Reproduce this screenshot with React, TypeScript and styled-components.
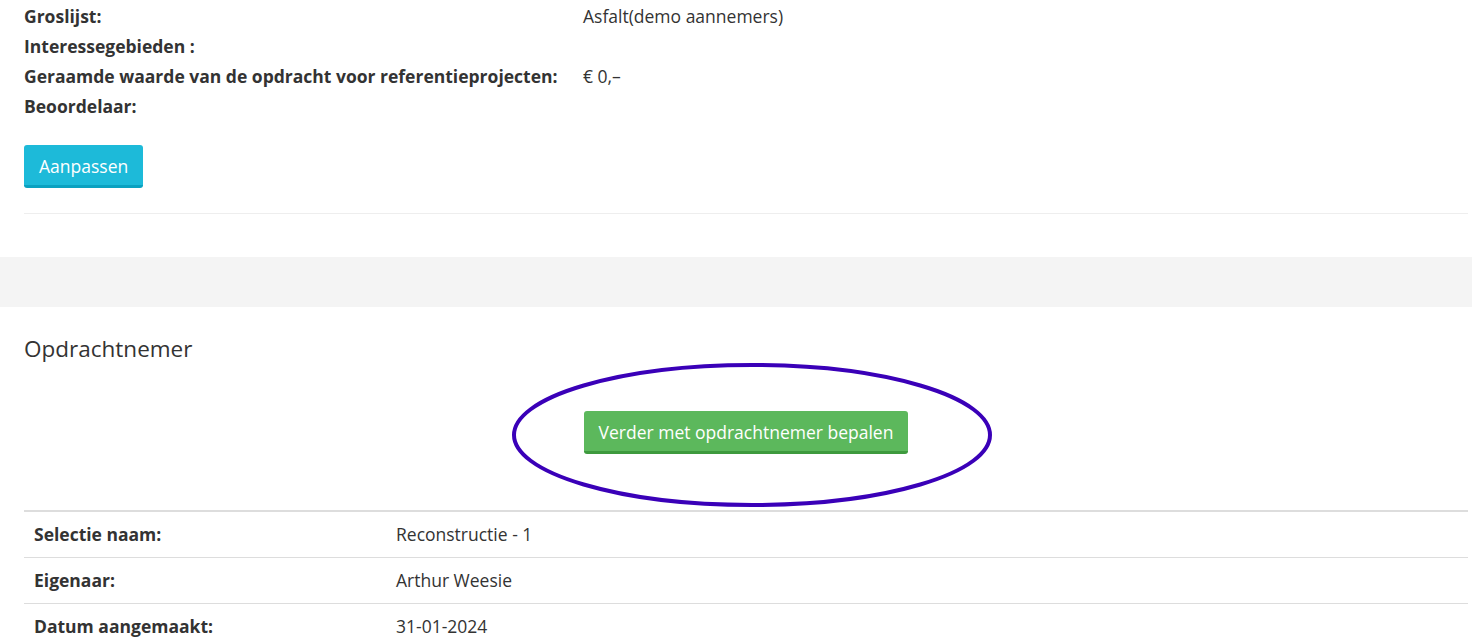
import React, { FC } from 'react';
import styled, { createGlobalStyle } from 'styled-components';

const GlobalStyle = createGlobalStyle`
  body {
    margin: 0;
    background: #fff;
    font-family: 'Open Sans', 'Liberation Sans', sans-serif;
    color: #333;
    font-size: 17.5px;
  }
  * { box-sizing: border-box; }
`;

const StyledSection = styled.section`
  padding: 1px 4px 0 24px;
`;

const StyledInfoList = styled.div`
  display: grid;
  grid-template-columns: 559px 1fr;
`;

const StyledInfoLabel = styled.div`
  font-weight: 700;
  line-height: 30px;
  height: 30px;
  white-space: nowrap;
`;

const StyledInfoValue = styled.div`
  line-height: 30px;
  height: 30px;
`;

const StyledButton = styled.button<{ $variant: 'info' | 'success' }>`
  font-family: 'Open Sans', 'Liberation Sans', sans-serif;
  font-size: 17.5px;
  color: #fff;
  border: none;
  border-radius: 3px;
  cursor: pointer;
  height: 43px;
  padding: 2px 15px 0;
  background: ${(p) => (p.$variant === 'info' ? '#1dbad9' : '#5cb85c')};
  border-bottom: 3px solid ${(p) => (p.$variant === 'info' ? '#0aa1c0' : '#3e9a3e')};
`;

const StyledActions = styled.div`
  margin-top: 24px;
`;

const StyledDivider = styled.hr`
  margin: 25px 0 0;
  border: none;
  border-top: 1px solid #eeeeee;
`;

const StyledBand = styled.div`
  margin-top: 43px;
  height: 50px;
  background: #f4f4f4;
`;

const StyledHeading = styled.h3`
  margin: 0;
  font-size: 22.5px;
  font-weight: 400;
  line-height: 30px;
  padding-top: 26px;
  color: #333;
`;

const StyledCenter = styled.div`
  display: flex;
  justify-content: center;
  margin-top: 47px;
`;

const StyledHighlight = styled.div`
  position: relative;
`;

const StyledEllipse = styled.svg`
  position: absolute;
  left: -73px;
  top: -49px;
  pointer-events: none;
  overflow: visible;
`;

const StyledTable = styled.table`
  width: 100%;
  border-collapse: collapse;
  margin-top: 56px;
  border-top: 2px solid #dddddd;
`;

const StyledRow = styled.tr`
  & + & td {
    border-top: 1px solid #dddddd;
  }
`;

const StyledCell = styled.td<{ $bold?: boolean }>`
  padding: 0 10px;
  height: 46px;
  font-weight: ${(p) => (p.$bold ? 700 : 400)};
  width: ${(p) => (p.$bold ? '362px' : 'auto')};
  vertical-align: middle;
`;

const info = [
  { label: 'Groslijst:', value: 'Asfalt(demo aannemers)' },
  { label: 'Interessegebieden :', value: '' },
  { label: 'Geraamde waarde van de opdracht voor referentieprojecten:', value: '€ 0,–' },
  { label: 'Beoordelaar:', value: '' },
];

const details = [
  { label: 'Selectie naam:', value: 'Reconstructie - 1' },
  { label: 'Eigenaar:', value: 'Arthur Weesie' },
  { label: 'Datum aangemaakt:', value: '31-01-2024' },
];

const App: FC = () => {
  return (
    <>
      <GlobalStyle />
      <StyledSection>
        <StyledInfoList>
          {info.map((row) => (
            <React.Fragment key={row.label}>
              <StyledInfoLabel>{row.label}</StyledInfoLabel>
              <StyledInfoValue>{row.value}</StyledInfoValue>
            </React.Fragment>
          ))}
        </StyledInfoList>
        <StyledActions>
          <StyledButton $variant="info">Aanpassen</StyledButton>
        </StyledActions>
        <StyledDivider />
      </StyledSection>
      <StyledBand />
      <StyledSection>
        <StyledHeading>Opdrachtnemer</StyledHeading>
        <StyledCenter>
          <StyledHighlight>
            <StyledButton $variant="success">Verder met opdrachtnemer bepalen</StyledButton>
            <StyledEllipse width="482" height="146" viewBox="0 0 482 146">
              <ellipse
                cx="241"
                cy="73"
                rx="238"
                ry="70"
                fill="none"
                stroke="#3a00b8"
                strokeWidth="4"
              />
            </StyledEllipse>
          </StyledHighlight>
        </StyledCenter>
        <StyledTable>
          <tbody>
            {details.map((row) => (
              <StyledRow key={row.label}>
                <StyledCell $bold>{row.label}</StyledCell>
                <StyledCell>{row.value}</StyledCell>
              </StyledRow>
            ))}
          </tbody>
        </StyledTable>
      </StyledSection>
    </>
  );
};

export default App;
